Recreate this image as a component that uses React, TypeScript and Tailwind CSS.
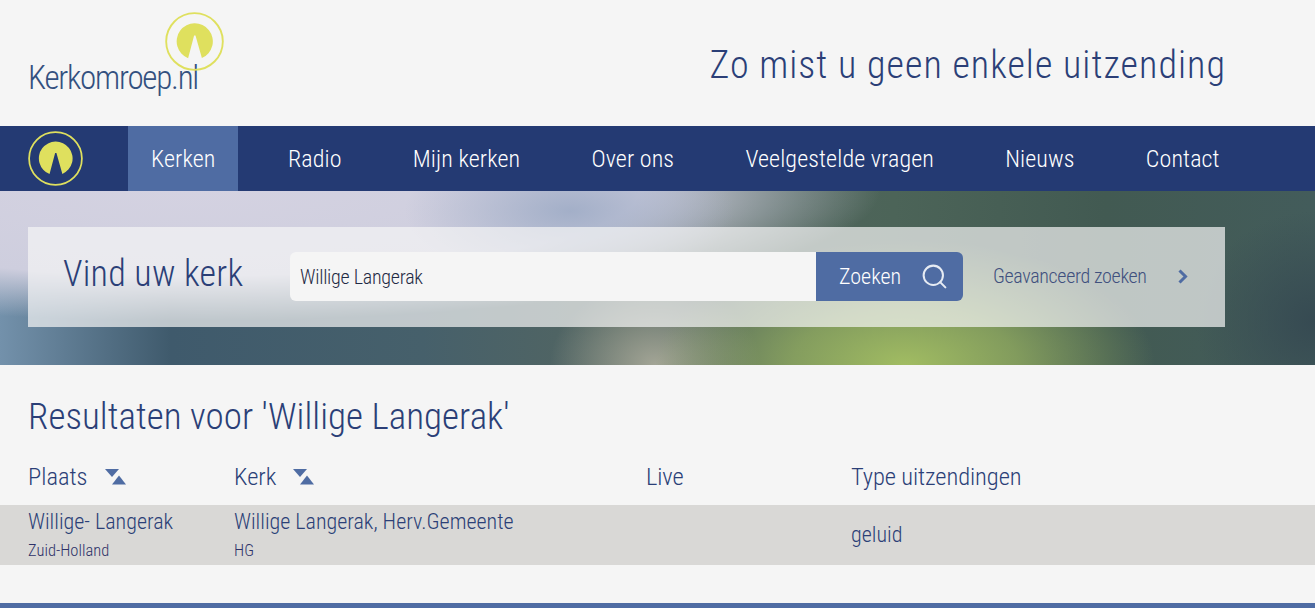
import { Search } from "lucide-react";

const font = "font-['Roboto','Liberation_Sans',sans-serif] [font-stretch:75%] font-light";

const Mark = ({ className }: { className: string }) => (
  <svg viewBox="0 0 60 60" className={className} fill="none">
    <circle cx="30" cy="30" r="28.8" stroke="#dfe05e" strokeWidth="1.9" />
    <path d="M23.5 47 A18.4 18.4 0 1 1 37.5 46.8 L31 24 L29.6 24 Z" fill="#dfe05e" />
  </svg>
);

const SortIcon = () => (
  <svg viewBox="0 0 21 16" className="w-[21px] h-[16px] ml-[17px]">
    <path d="M0 0 H14 L7 8 Z" fill="#4f6ca3" />
    <path d="M7 15.5 L14 6.5 L21 15.5 Z" fill="#4f6ca3" />
  </svg>
);

const navItems = ["Radio", "Mijn kerken", "Over ons", "Veelgestelde vragen", "Nieuws", "Contact"];

export default function App() {
  return (
    <div className={`${font} h-[608px] overflow-hidden bg-[#f5f5f5] text-[#2b3f77] flex flex-col`}>
      <header className="h-[126px] shrink-0 flex justify-between pl-[28px] pr-[89px]">
        <div className="relative w-[200px]">
          <span className="absolute left-0 top-[58px] text-[33px] leading-[40px] tracking-[-1.25px] text-[#33507f] whitespace-nowrap font-[350]">Kerkomroep.nl</span>
          <Mark className="absolute left-[137px] top-[12px] w-[59px] h-[59px]" />
        </div>
        <div className="text-[38px] leading-[46px] mt-[42px] tracking-[1.05px]">Zo mist u geen enkele uitzending</div>
      </header>

      <nav className="h-[65px] shrink-0 bg-[#243a73] flex items-stretch pl-[28px] text-white text-[24px] font-[350] tracking-[0.1px]">
        <div className="w-[100px] flex items-center">
          <Mark className="w-[55px] h-[55px]" />
        </div>
        <a className="bg-[#4f6ca3] w-[110px] pl-[23px] flex items-center">Kerken</a>
        <div className="flex items-center gap-[71.25px] ml-[50px]">
          {navItems.map((item) => (
            <a key={item}>{item}</a>
          ))}
        </div>
      </nav>

      <section className="h-[174px] shrink-0 px-[28px] pt-[36px] bg-[radial-gradient(ellipse_250px_125px_at_905px_174px,#a1bc62_0%,rgba(150,176,96,0.75)_45%,rgba(140,165,95,0)_100%),radial-gradient(ellipse_105px_85px_at_655px_174px,#a3a596_0%,rgba(163,165,150,0)_100%),radial-gradient(ellipse_165px_70px_at_570px_20px,#a3afc8_0%,rgba(163,175,200,0)_100%),radial-gradient(ellipse_690px_130px_at_190px_0px,#d4d2e1_0%,#cecede_65%,rgba(206,206,222,0)_100%),radial-gradient(ellipse_120px_110px_at_1315px_130px,#364a52_0%,rgba(54,74,82,0)_100%),linear-gradient(90deg,#7391ab_0%,#3f5a6c_13%,#46606b_32%,#546660_48%,#4c6458_68%,#425a52_84%,#435c5b_100%)]">
        <div className="h-[100px] w-[1197px] bg-[rgba(245,245,245,0.7)] flex">
          <h1 className="w-[262px] pl-[35px] pt-[23px] text-[36px] leading-[48px] tracking-[0.25px] font-light whitespace-nowrap">Vind uw kerk</h1>
          <div className="w-[526px] h-[49px] mt-[25px] bg-[#f5f5f5] rounded-l-[6px] flex items-center pl-[10px] text-[20px] tracking-[-0.25px] font-[350] text-[#1f2a44]">Willige Langerak</div>
          <button className="w-[147px] h-[49px] mt-[25px] bg-[#4f6ca3] rounded-r-[6px] text-white text-[22px] font-[350] flex items-center pl-[23px]">
            Zoeken
            <Search className="w-[29px] h-[29px] ml-[19px] text-[#e6ebf3]" strokeWidth={1.7} />
          </button>
          <a className="ml-[30px] text-[20px] leading-[98px] tracking-[-0.35px] text-[#40507e] font-[350]">Geavanceerd zoeken</a>
          <svg viewBox="0 0 10 15" className="w-[10px] h-[15px] ml-[31px] mt-[42px]" fill="none">
            <path d="M1.5 1.5 L7.5 7.5 L1.5 13.5" stroke="#4f6ca3" strokeWidth="3" />
          </svg>
        </div>
      </section>

      <main className="flex-1">
        <h2 className="pl-[28px] pt-[29px] text-[37px] leading-[46px] tracking-[0.05px] font-light">Resultaten voor 'Willige Langerak'</h2>
        <div className="grid grid-cols-[206px_412px_205px_1fr] items-center pl-[28px] h-[65px] pt-[9px] text-[24.5px] leading-[30px]">
          <div className="flex items-center"><span>Plaats</span><SortIcon /></div>
          <div className="flex items-center"><span>Kerk</span><SortIcon /></div>
          <div className="tracking-[-0.1px]">Live</div>
          <div className="tracking-[-0.1px]">Type uitzendingen</div>
        </div>
        <div className="h-[60px] bg-[#d9d8d6] grid grid-cols-[206px_412px_205px_1fr] pl-[28px] items-center">
          <div>
            <div className="text-[22px] leading-[26px]">Willige- Langerak</div>
            <div className="text-[16.5px] leading-[20px] mt-[6px] text-[#2e3268]">Zuid-Holland</div>
          </div>
          <div>
            <div className="text-[22px] leading-[26px]">Willige Langerak, Herv.Gemeente</div>
            <div className="text-[16.5px] leading-[20px] mt-[6px] text-[#2e3268]">HG</div>
          </div>
          <div />
          <div className="text-[22px] pb-[2px]">geluid</div>
        </div>
      </main>

      <footer className="h-[5px] shrink-0 bg-[#4f6ca3]" />
    </div>
  );
}
